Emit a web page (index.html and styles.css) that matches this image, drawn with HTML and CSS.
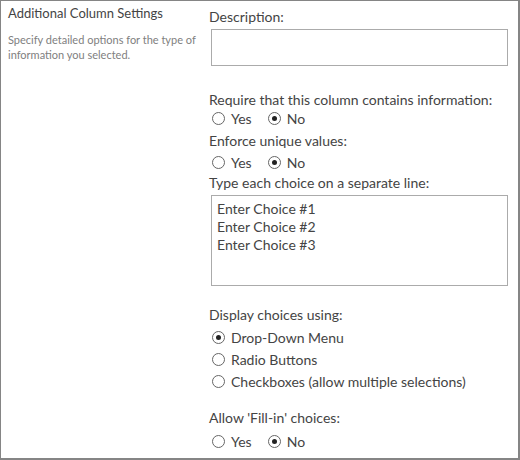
FILE: index.html
```
<!DOCTYPE html>
<html lang="en">
<head>
  <meta charset="UTF-8">
  <title>Additional Column Settings</title>
  <link rel="stylesheet" href="styles.css">
</head>
<body>
  <div class="panel">
    <div class="section-info">
      <h3>Additional Column Settings</h3>
      <p>Specify detailed options for the type of information you selected.</p>
    </div>

    <div class="section-fields">
      <label class="field-label">Description:</label>
      <div class="textbox"></div>

      <label class="field-label require">Require that this column contains information:</label>
      <div class="radio-row row-require">
        <span class="radio"></span><span class="radio-text">Yes</span>
        <span class="radio checked"></span><span class="radio-text">No</span>
      </div>

      <label class="field-label unique">Enforce unique values:</label>
      <div class="radio-row row-unique">
        <span class="radio"></span><span class="radio-text">Yes</span>
        <span class="radio checked"></span><span class="radio-text">No</span>
      </div>

      <label class="field-label choices">Type each choice on a separate line:</label>
      <div class="textarea">
        <div>Enter Choice #1</div>
        <div>Enter Choice #2</div>
        <div>Enter Choice #3</div>
      </div>

      <label class="field-label display">Display choices using:</label>
      <div class="radio-list">
        <div class="radio-row"><span class="radio checked"></span><span class="radio-text">Drop-Down Menu</span></div>
        <div class="radio-row"><span class="radio"></span><span class="radio-text">Radio Buttons</span></div>
        <div class="radio-row"><span class="radio"></span><span class="radio-text">Checkboxes (allow multiple selections)</span></div>
      </div>

      <label class="field-label fill-in">Allow 'Fill-in' choices:</label>
      <div class="radio-row row-fill-in">
        <span class="radio"></span><span class="radio-text">Yes</span>
        <span class="radio checked"></span><span class="radio-text">No</span>
      </div>
    </div>
  </div>
</body>
</html>
```

FILE: styles.css
```
html, body {
  margin: 0;
  padding: 0;
}
body {
  font-family: Lato, "Open Sans", sans-serif;
  color: #444;
  background: #fff;
}
.panel {
  width: 520px;
  height: 460px;
  box-sizing: border-box;
  border-top: 1px solid #858585;
  border-left: 1px solid #858585;
  border-right: 2px solid #858585;
  border-bottom: 2px solid #858585;
  display: grid;
  grid-template-columns: 208px 1fr;
  overflow: hidden;
}
.section-info {
  padding: 4px 0 0 7px;
}
.section-info h3 {
  margin: 0;
  font-size: 13px;
  font-weight: normal;
  line-height: 16px;
  color: #444;
}
.section-info p {
  margin: 11px 0 0;
  font-size: 11px;
  line-height: 15px;
  color: #808080;
  width: 190px;
}
.section-fields {
  padding: 6px 10px 0 0;
}
.field-label {
  display: block;
  font-size: 14px;
  line-height: 20px;
  color: #444;
}
.require { margin-top: 24px; }
.row-require { margin-top: -2px; }
.unique { margin-top: 3px; }
.row-unique { margin-top: 1px; }
.choices { margin-top: 1px; }
.display { margin-top: 19px; }
.radio-list { margin-top: 1px; }
.fill-in { margin-top: 16px; }
.row-fill-in { margin-top: 3px; }
.textbox {
  margin: 2px 0 0 2px;
  height: 35px;
  border: 1px solid #ababab;
}
.textarea {
  margin: 2px 0 0 2px;
  height: 83px;
  border: 1px solid #ababab;
  padding: 4px 5px 2px;
  font-size: 14px;
  line-height: 18px;
  color: #444;
}
.radio-row {
  display: flex;
  align-items: center;
  height: 20px;
  padding-left: 3px;
  font-size: 14px;
}
.radio-list .radio-row {
  height: 22px;
}
.radio {
  width: 11px;
  height: 11px;
  border: 1px solid #666;
  border-radius: 50%;
  box-sizing: content-box;
  position: relative;
  flex: none;
}
.radio.checked::after {
  content: "";
  position: absolute;
  left: 3px;
  top: 3px;
  width: 5px;
  height: 5px;
  border-radius: 50%;
  background: #222;
}
.radio-text {
  margin-left: 6px;
  margin-right: 16px;
  color: #444;
}
```
